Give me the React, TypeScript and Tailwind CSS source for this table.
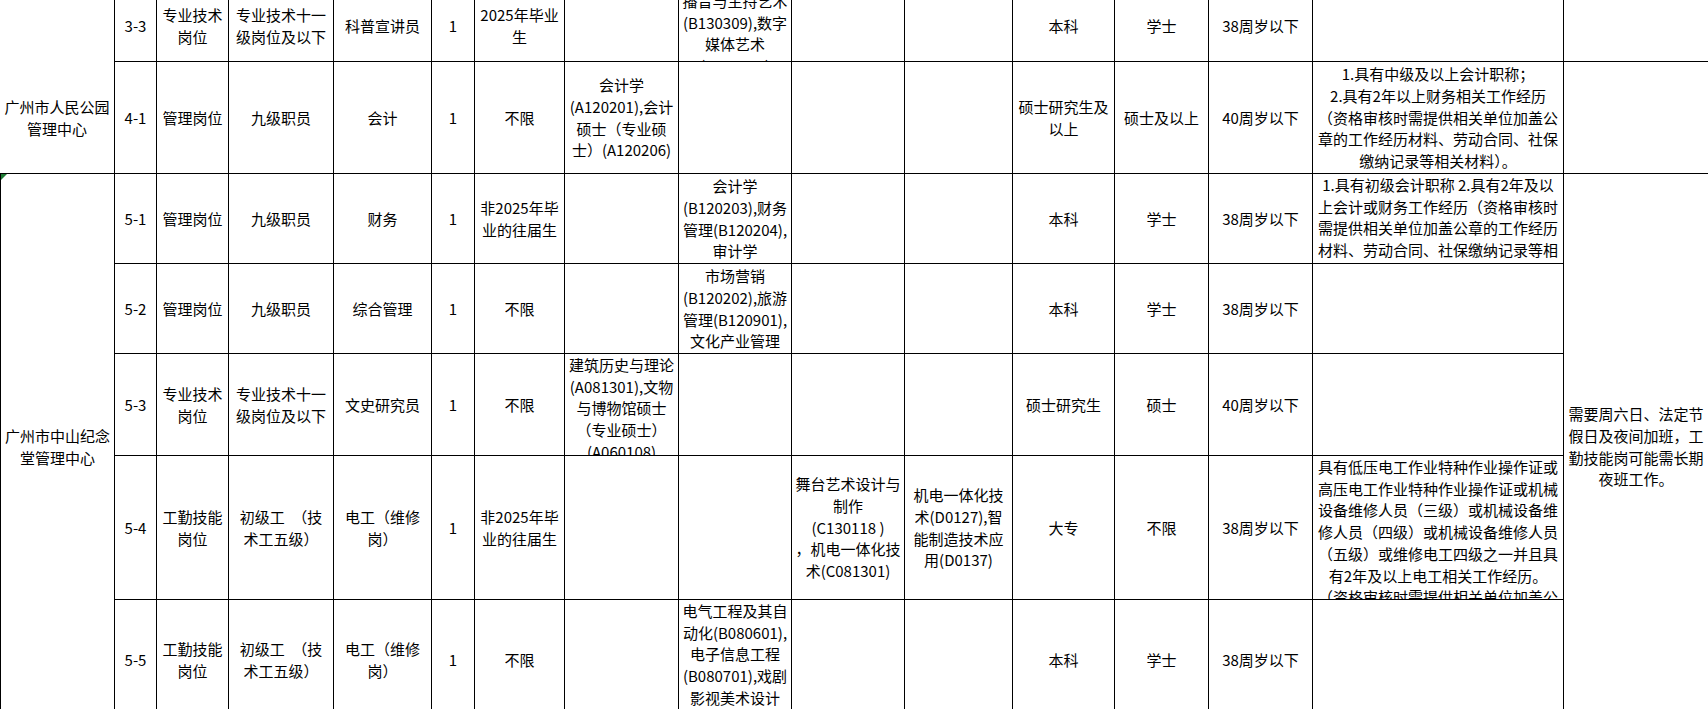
import React from 'react';

type CellData = {
  lines: string[];
  cls?: string;
};

const c = (v: string | string[], cls = ''): CellData => ({
  lines: Array.isArray(v) ? v : v ? [v] : [],
  cls,
});

// rows of the sheet, merged cells use row-span and are left out of later rows
const rows: CellData[][] = [
  [
    c('', 'border-b-0'),
    c('3-3'),
    c(['专业技术', '岗位']),
    c(['专业技术十一', '级岗位及以下']),
    c('科普宣讲员'),
    c('1'),
    c(['2025年毕业', '生']),
    c(''),
    c(['播音与主持艺术', '(B130309),数字', '媒体艺术', '(B130508)']),
    c(''),
    c(''),
    c('本科'),
    c('学士'),
    c('38周岁以下'),
    c(''),
    c('', 'border-r-0'),
  ],
  [
    c(['广州市人民公园', '管理中心']),
    c('4-1'),
    c('管理岗位'),
    c('九级职员'),
    c('会计'),
    c('1'),
    c('不限'),
    c(['会计学', '(A120201),会计', '硕士（专业硕', '士）(A120206)']),
    c(''),
    c(''),
    c(''),
    c(['硕士研究生及', '以上']),
    c('硕士及以上'),
    c('40周岁以下'),
    c([
      '1.具有中级及以上会计职称；',
      '2.具有2年以上财务相关工作经历',
      '（资格审核时需提供相关单位加盖公',
      '章的工作经历材料、劳动合同、社保',
      '缴纳记录等相关材料）。',
    ]),
    c('', 'border-r-0'),
  ],
  [
    c(['广州市中山纪念', '堂管理中心'], 'row-span-5 border-l relative'),
    c('5-1'),
    c('管理岗位'),
    c('九级职员'),
    c('财务'),
    c('1'),
    c(['非2025年毕', '业的往届生']),
    c(''),
    c(['会计学', '(B120203),财务', '管理(B120204),', '审计学']),
    c(''),
    c(''),
    c('本科'),
    c('学士'),
    c('38周岁以下'),
    c([
      '1.具有初级会计职称 2.具有2年及以',
      '上会计或财务工作经历（资格审核时',
      '需提供相关单位加盖公章的工作经历',
      '材料、劳动合同、社保缴纳记录等相',
      '关材料）。',
    ]),
    c(['需要周六日、法定节', '假日及夜间加班，工', '勤技能岗可能需长期', '夜班工作。'], 'row-span-5 border-r-0'),
  ],
  [
    c('5-2'),
    c('管理岗位'),
    c('九级职员'),
    c('综合管理'),
    c('1'),
    c('不限'),
    c(''),
    c(['市场营销', '(B120202),旅游', '管理(B120901),', '文化产业管理']),
    c(''),
    c(''),
    c('本科'),
    c('学士'),
    c('38周岁以下'),
    c(''),
  ],
  [
    c('5-3'),
    c(['专业技术', '岗位']),
    c(['专业技术十一', '级岗位及以下']),
    c('文史研究员'),
    c('1'),
    c('不限'),
    c(['建筑历史与理论', '(A081301),文物', '与博物馆硕士', '（专业硕士）', '(A060108)']),
    c(''),
    c(''),
    c(''),
    c('硕士研究生'),
    c('硕士'),
    c('40周岁以下'),
    c(''),
  ],
  [
    c('5-4'),
    c(['工勤技能', '岗位']),
    c(['初级工　（技', '术工五级）']),
    c(['电工（维修', '岗）']),
    c('1'),
    c(['非2025年毕', '业的往届生']),
    c(''),
    c(''),
    c(['舞台艺术设计与', '制作', '(C130118 )', '，机电一体化技', '术(C081301)']),
    c(['机电一体化技', '术(D0127),智', '能制造技术应', '用(D0137)']),
    c('大专'),
    c('不限'),
    c('38周岁以下'),
    c([
      '具有低压电工作业特种作业操作证或',
      '高压电工作业特种作业操作证或机械',
      '设备维修人员（三级）或机械设备维',
      '修人员（四级）或机械设备维修人员',
      '（五级）或维修电工四级之一并且具',
      '有2年及以上电工相关工作经历。',
      '（资格审核时需提供相关单位加盖公',
      '章的工作经历材料、劳动合同、社保',
    ]),
  ],
  [
    c('5-5'),
    c(['工勤技能', '岗位']),
    c(['初级工　（技', '术工五级）']),
    c(['电工（维修', '岗）']),
    c('1'),
    c('不限'),
    c(''),
    c(['电气工程及其自', '动化(B080601),', '电子信息工程', '(B080701),戏剧', '影视美术设计', '(B130407)']),
    c(''),
    c(''),
    c('本科'),
    c('学士'),
    c('38周岁以下'),
    c(''),
  ],
];

function Cell({ cell, corner }: { cell: CellData; corner?: boolean }) {
  return (
    <div
      className={`border-r border-b border-black overflow-hidden flex flex-col [justify-content:safe_center] items-center px-[4px] ${cell.cls}`}
    >
      {corner && (
        <span className="absolute left-0 top-0 w-0 h-0 border-t-[6px] border-r-[6px] border-t-[#1e7a34] border-r-transparent" />
      )}
      {cell.lines.map((line, i) => (
        <div key={i} className="whitespace-nowrap text-center">
          {line}
        </div>
      ))}
    </div>
  );
}

export default function App() {
  return (
    <div className="w-[1708px] h-[709px] overflow-hidden bg-white">
      <div
        className="-mt-[10px] grid grid-cols-[115px_42px_72px_105px_98px_43px_90px_114px_113px_113px_108px_102px_94px_104px_251px_144px] grid-rows-[72px_112px_90px_90px_102px_144px_120px] text-[15px] leading-[21.7px] text-black"
        style={{ fontFamily: '"Noto Sans CJK SC", "Noto Sans", sans-serif' }}
      >
        {rows.map((row, ri) =>
          row.map((cell, ci) => (
            <Cell key={`${ri}-${ci}`} cell={cell} corner={ri === 2 && ci === 0} />
          ))
        )}
      </div>
    </div>
  );
}
